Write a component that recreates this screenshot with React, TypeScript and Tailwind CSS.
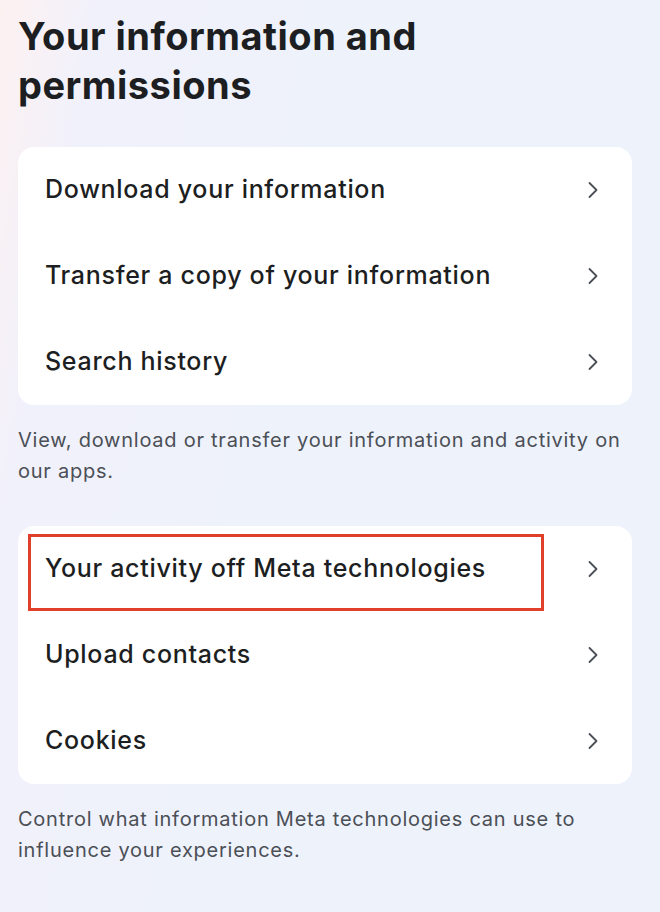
import React from "react";

const Chevron = () => (
  <svg width="14" height="20" viewBox="0 0 14 20" fill="none" className="shrink-0">
    <path d="M3.5 3 L10.5 10 L3.5 17" stroke="#4b4f56" strokeWidth="1.8" strokeLinecap="round" strokeLinejoin="round" />
  </svg>
);

const Row = ({ label }: { label: string }) => (
  <div className="flex h-[86px] items-center justify-between pl-[27px] pr-[32px]">
    <span className="text-[25px] font-medium text-[#1c1e21] tracking-[0.7px]">{label}</span>
    <Chevron />
  </div>
);

export default function App() {
  return (
    <div
      className="min-h-[912px] w-[660px] bg-[linear-gradient(100deg,#fdf1f1_0%,#f1f1fb_12%,#eef2fb_40%,#eef2fb_100%)] pl-[18px] pr-[28px] pt-[12px]"
      style={{ fontFamily: "Inter, 'Noto Sans', sans-serif" }}
    >
      <h1 className="text-[38px] font-bold leading-[49px] text-[#1c1e21] tracking-[0.5px]">
        Your information and
        <br />
        permissions
      </h1>
      <div className="mt-[37px] rounded-[16px] bg-white">
        <Row label="Download your information" />
        <Row label="Transfer a copy of your information" />
        <Row label="Search history" />
      </div>
      <p className="mt-[20px] text-[20px] leading-[31px] text-[#4b4f56] tracking-[0.75px]">
        View, download or transfer your information and activity on our apps.
      </p>
      <div className="relative mt-[39px] rounded-[16px] bg-white">
        <div className="absolute left-[10px] top-[8px] h-[77px] w-[516px] border-[3px] border-[#e0402a]" />
        <Row label="Your activity off Meta technologies" />
        <Row label="Upload contacts" />
        <Row label="Cookies" />
      </div>
      <p className="mt-[20px] text-[20px] leading-[31px] text-[#4b4f56] tracking-[0.75px]">
        Control what information Meta technologies can use to influence your experiences.
      </p>
    </div>
  );
}
